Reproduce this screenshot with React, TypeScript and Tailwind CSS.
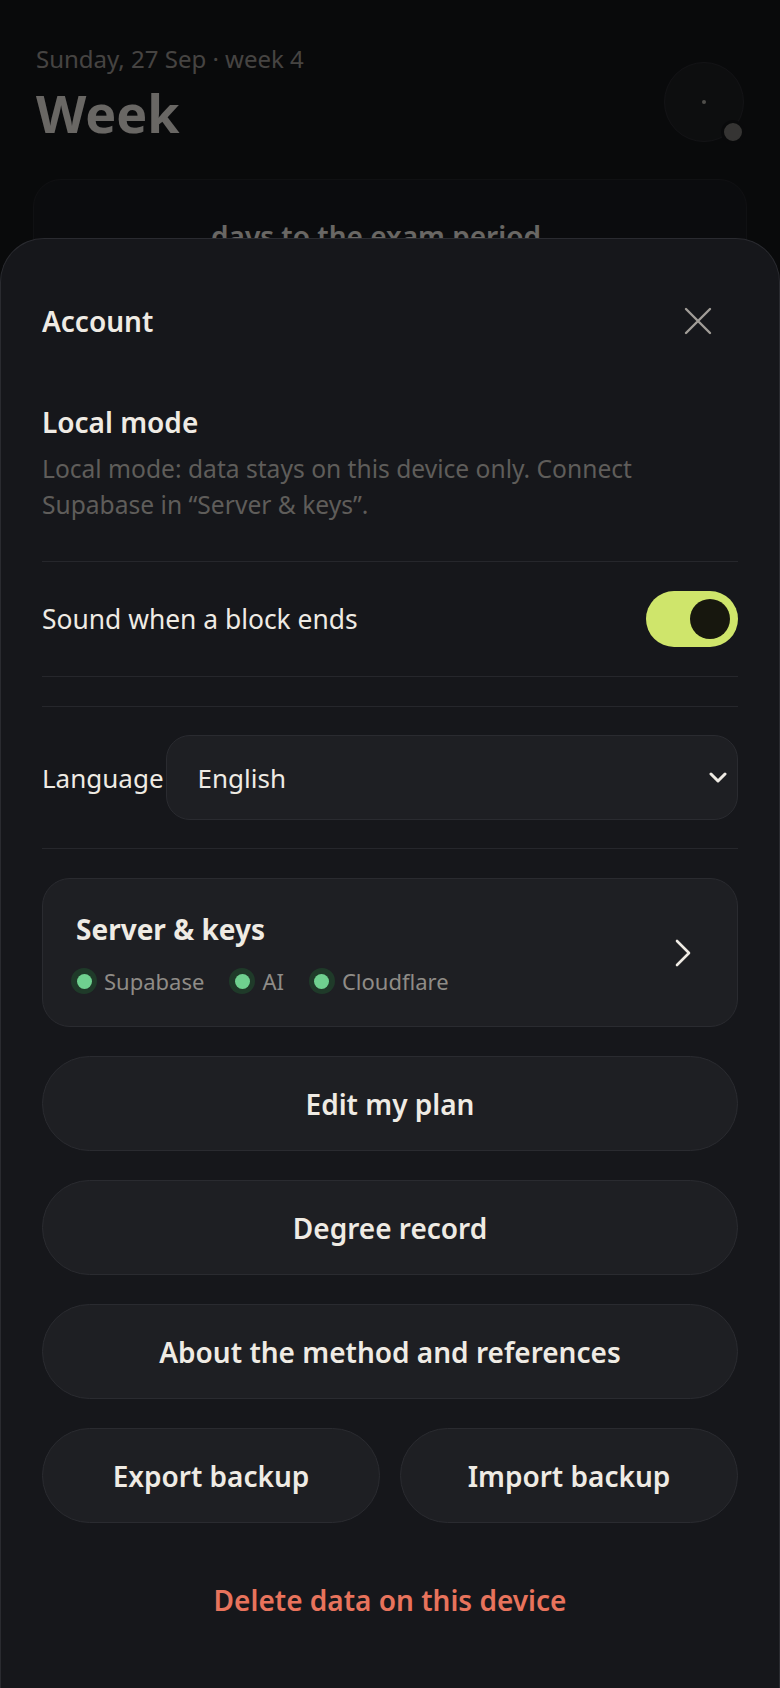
import { ChevronRight } from "lucide-react";

const font = { fontFamily: '"Noto Sans", "Open Sans", sans-serif' };

const services = ["Supabase", "AI", "Cloudflare"];

const actions = ["Edit my plan", "Degree record", "About the method and references"];

function StatusDot({ label }: { label: string }) {
  return (
    <span className="flex items-center gap-[7px]">
      <span className="flex h-[26px] w-[26px] items-center justify-center rounded-full bg-[#1f3a29]">
        <span className="h-[15px] w-[15px] rounded-full bg-[#6fd08f]" />
      </span>
      <span className="text-[22px] leading-[26px] text-[#8f8c87]">{label}</span>
    </span>
  );
}

function PillButton({ children }: { children: React.ReactNode }) {
  return (
    <button className="flex h-[95px] w-full items-center justify-center rounded-full border border-[#2a2b30] bg-[#1e1f23] text-[28px] font-semibold text-[#efebe4]">
      {children}
    </button>
  );
}

export default function App() {
  return (
    <div className="relative h-[1688px] w-[780px] overflow-hidden bg-[#16171b]" style={font}>
      {/* page behind the sheet */}
      <div className="px-[33px] pt-[43px]">
        <div className="flex items-start justify-between">
          <div className="pl-[3px]">
            <div className="text-[24px] leading-[32px] text-[#a09c96]">Sunday, 27 Sep · week 4</div>
            <h1 className="mt-[9px] text-[52px] font-bold leading-[57px] text-[#efebe4]">Week</h1>
          </div>
          <div className="relative mr-[3px] mt-[19px] flex h-[80px] w-[80px] items-center justify-center rounded-full border border-[#2c2d32] bg-[#1f2024]">
            <span className="h-[4px] w-[4px] rounded-full bg-[#b5b1aa]" />
            <span className="absolute left-[56px] top-[57px] h-[24px] w-[24px] rounded-full border-[3px] border-[#16171b] bg-[#7a7874]" />
          </div>
        </div>
        <div className="mt-[37px] h-[200px] rounded-[28px] border border-[#26272c] bg-[#1b1c20] pr-[28px] pt-[38px] text-center text-[28px] font-semibold leading-[36px] text-[#efebe4]">
          days to the exam period
        </div>
      </div>

      {/* backdrop */}
      <div className="absolute inset-0 bg-black/[0.56]" />

      {/* account sheet */}
      <div className="absolute inset-x-0 bottom-0 top-[238px] rounded-t-[44px] border border-b-0 border-[#2a2b30] bg-[#16171b] px-[41px] pt-[60px]">
        <div className="flex h-[44px] items-center justify-between">
          <h2 className="text-[28px] font-semibold leading-[36px] text-[#efebe4]">Account</h2>
          <button className="mr-[18px] flex h-[44px] w-[44px] items-center justify-center">
            <svg width="30" height="30" viewBox="0 0 30 30" fill="none" stroke="#a19d97" strokeWidth="2.4" strokeLinecap="round">
              <path d="M3 3 L27 27 M27 3 L3 27" />
            </svg>
          </button>
        </div>

        <div className="mt-[61px]">
          <h3 className="text-[28px] font-semibold leading-[36px] text-[#efebe4]">Local mode</h3>
          <p className="mt-[11px] text-[24.6px] leading-[36px] text-[#5f5d5a]">
            Local mode: data stays on this device only. Connect
            <br />
            Supabase in “Server &amp; keys”.
          </p>
        </div>

        <div className="mt-[38px] flex flex-col gap-[29px]">
          <div className="h-px bg-[#26272c]" />

          <div className="flex items-center justify-between">
            <span className="text-[26.4px] leading-[34px] text-[#efebe4]">Sound when a block ends</span>
            <button className="flex h-[56px] w-[92px] items-center justify-end rounded-full bg-[#cfe56b] pr-[8px]">
              <span className="h-[40px] w-[40px] rounded-full bg-[#17170e]" />
            </button>
          </div>

          <div className="h-px bg-[#26272c]" />
          <div className="h-px bg-[#26272c]" />

          <div className="-my-px flex items-center gap-[2px]">
            <span className="text-[26px] leading-[34px] text-[#efebe4]">Language</span>
            <div className="flex h-[85px] flex-1 items-center justify-between rounded-[24px] border border-[#2a2b30] bg-[#1e1f23] pl-[31px] pr-[10px]">
              <span className="text-[26px] leading-[34px] text-[#efebe4]">English</span>
              <svg width="18" height="12" viewBox="0 0 18 12" fill="none" stroke="#efebe4" strokeWidth="3" strokeLinecap="round" strokeLinejoin="round">
                <path d="M2 2 L9 9 L16 2" />
              </svg>
            </div>
          </div>

          <div className="h-px bg-[#26272c]" />

          <div className="flex h-[149px] items-center justify-between rounded-[28px] border border-[#2a2b30] bg-[#1e1f23] pl-[28px] pr-[30px]">
            <div className="flex flex-col gap-[21px]">
              <span className="pl-[5px] text-[28px] font-bold leading-[36px] text-[#efebe4]">Server &amp; keys</span>
              <div className="flex items-center gap-[25px]">
                {services.map((s) => (
                  <StatusDot key={s} label={s} />
                ))}
              </div>
            </div>
            <ChevronRight size={48} strokeWidth={1.3} color="#efebe4" />
          </div>

          {actions.map((a) => (
            <PillButton key={a}>{a}</PillButton>
          ))}

          <div className="grid grid-cols-2 gap-[20px]">
            <PillButton>Export backup</PillButton>
            <PillButton>Import backup</PillButton>
          </div>

          <button className="flex h-[95px] w-full items-center justify-center text-[28px] font-semibold text-[#e8735c]">
            Delete data on this device
          </button>
        </div>
      </div>
    </div>
  );
}
